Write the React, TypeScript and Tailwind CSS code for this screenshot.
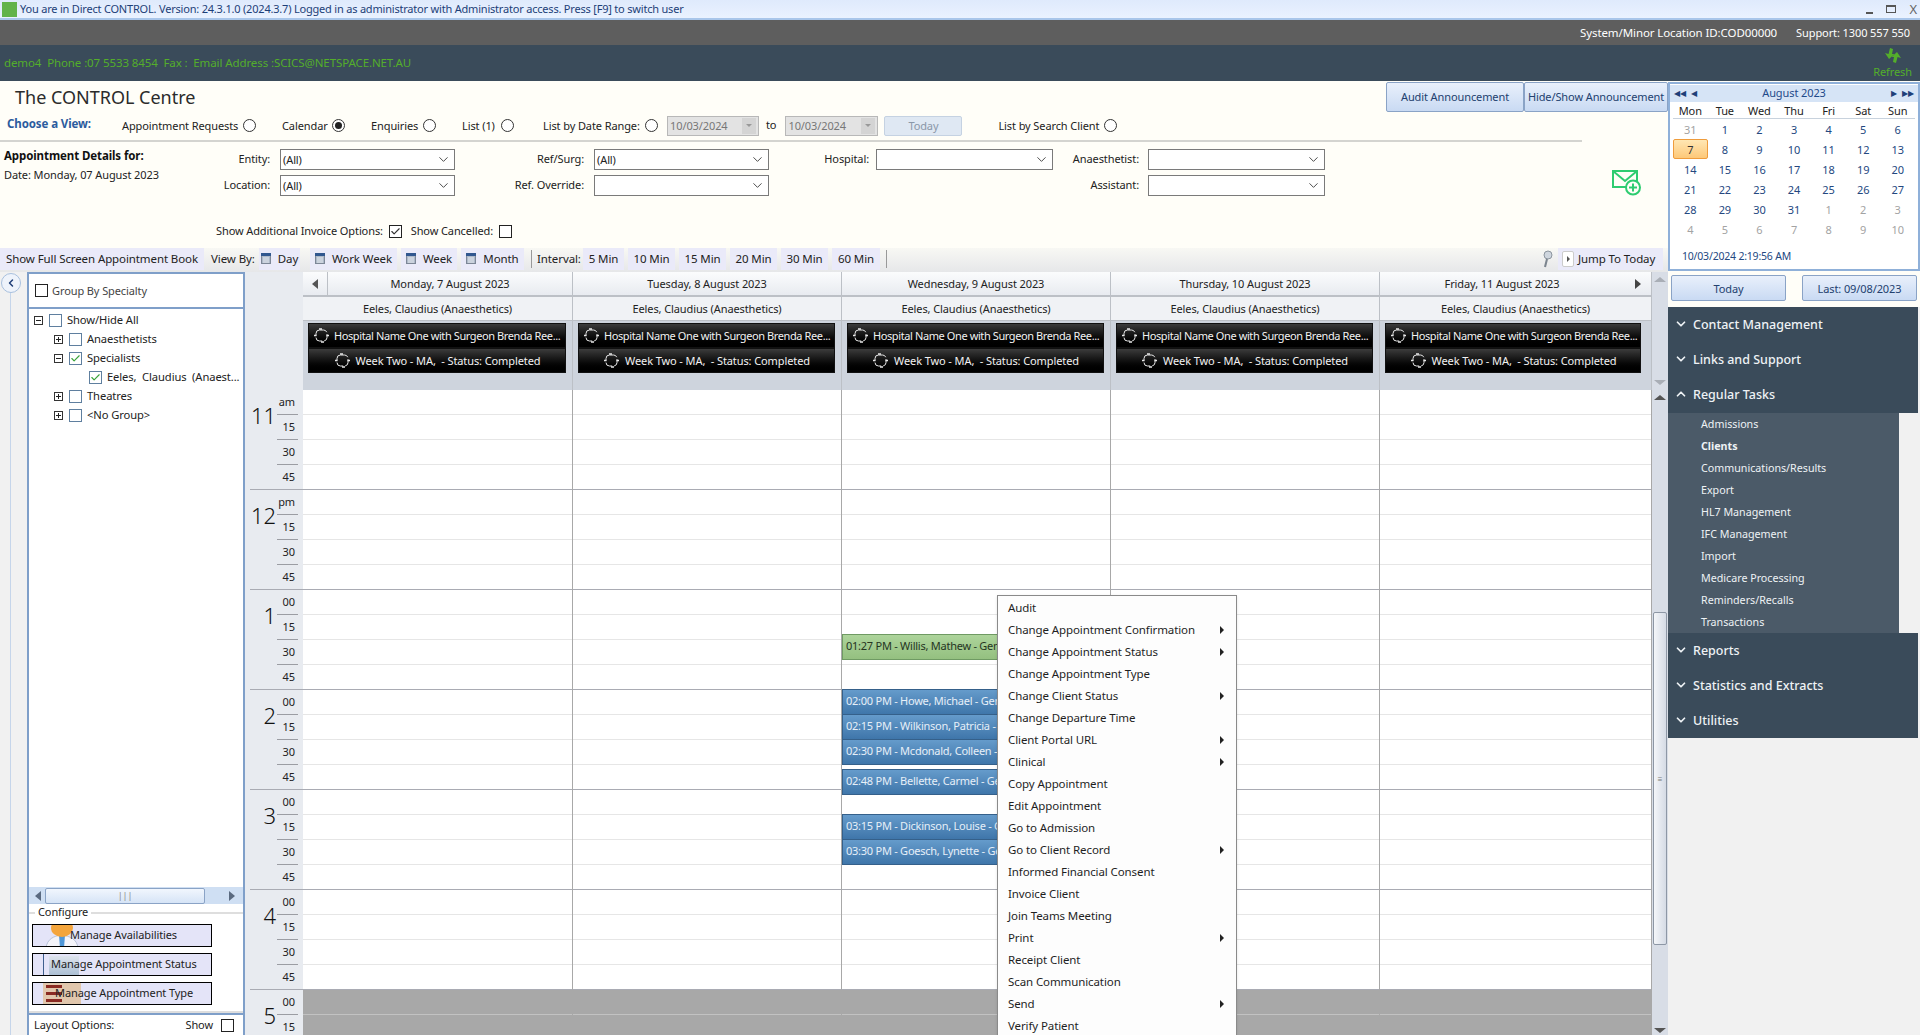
import React from 'react';
import { ChevronDown, ChevronUp, ChevronLeft, Check } from 'lucide-react';

const DAYS = [
  'Monday, 7 August 2023',
  'Tuesday, 8 August 2023',
  'Wednesday, 9 August 2023',
  'Thursday, 10 August 2023',
  'Friday, 11 August 2023',
];

const HOURS = [
  { n: '11', first: 'am' },
  { n: '12', first: 'pm' },
  { n: '1', first: '00' },
  { n: '2', first: '00' },
  { n: '3', first: '00' },
  { n: '4', first: '00' },
  { n: '5', first: '00' },
];

const MENU = [
  { t: 'Audit' },
  { t: 'Change Appointment Confirmation', sub: true },
  { t: 'Change Appointment Status', sub: true },
  { t: 'Change Appointment Type' },
  { t: 'Change Client Status', sub: true },
  { t: 'Change Departure Time' },
  { t: 'Client Portal URL', sub: true },
  { t: 'Clinical', sub: true },
  { t: 'Copy Appointment' },
  { t: 'Edit Appointment' },
  { t: 'Go to Admission' },
  { t: 'Go to Client Record', sub: true },
  { t: 'Informed Financial Consent' },
  { t: 'Invoice Client' },
  { t: 'Join Teams Meeting' },
  { t: 'Print', sub: true },
  { t: 'Receipt Client' },
  { t: 'Scan Communication' },
  { t: 'Send', sub: true },
  { t: 'Verify Patient' },
];

const APPTS = [
  { t: '01:27 PM - Willis, Mathew - General', top: 244, green: true },
  { t: '02:00 PM - Howe, Michael - General', top: 299 },
  { t: '02:15 PM - Wilkinson, Patricia - General', top: 324 },
  { t: '02:30 PM - Mcdonald, Colleen - General', top: 349 },
  { t: '02:48 PM - Bellette, Carmel - General', top: 379 },
  { t: '03:15 PM - Dickinson, Louise - General', top: 424 },
  { t: '03:30 PM - Goesch, Lynette - General', top: 449 },
];

const CAL = [
  ['31', '1', '2', '3', '4', '5', '6'],
  ['7', '8', '9', '10', '11', '12', '13'],
  ['14', '15', '16', '17', '18', '19', '20'],
  ['21', '22', '23', '24', '25', '26', '27'],
  ['28', '29', '30', '31', '1', '2', '3'],
  ['4', '5', '6', '7', '8', '9', '10'],
];

const TASKS = [
  'Admissions',
  'Clients',
  'Communications/Results',
  'Export',
  'HL7 Management',
  'IFC Management',
  'Import',
  'Medicare Processing',
  'Reminders/Recalls',
  'Transactions',
];

function Radio({ on }: { on?: boolean }) {
  return (
    <span className="flex h-[13px] w-[13px] shrink-0 items-center justify-center rounded-full border border-[#333] bg-white">
      {on && <span className="h-[7px] w-[7px] rounded-full bg-[#222]" />}
    </span>
  );
}

function RadioItem({ label, on, cls }: { label: string; on?: boolean; cls: string }) {
  return (
    <div className={`flex items-center justify-between ${cls}`}>
      <span>{label}</span>
      <Radio on={on} />
    </div>
  );
}

function Select({ value }: { value?: string }) {
  return (
    <div className="flex h-[21px] items-center justify-between border border-[#7a7a7a] bg-white pl-[2px] pr-[3px]">
      <span className="pb-px">{value}</span>
      <ChevronDown size={15} strokeWidth={1.4} className="text-[#333]" />
    </div>
  );
}

function Box({ on, blue }: { on?: boolean; blue?: boolean }) {
  return (
    <span
      className={`flex h-[13px] w-[13px] shrink-0 items-center justify-center border bg-white ${
        blue ? 'border-[#5f7f9f]' : 'border-[#222]'
      }`}
    >
      {on && (
        <Check size={11} strokeWidth={2.5} className={blue ? 'text-[#3aa43a]' : 'text-[#333]'} />
      )}
    </span>
  );
}

function Expander({ open }: { open?: boolean }) {
  return (
    <span className="relative flex h-[9px] w-[9px] shrink-0 items-center justify-center border border-[#333] bg-white">
      <span className="h-px w-[5px] bg-[#222]" />
      {!open && <span className="absolute h-[5px] w-px bg-[#222]" />}
    </span>
  );
}

function CalIcon() {
  return (
    <svg width="10" height="11" viewBox="0 0 10 11" className="shrink-0">
      <rect x="0.5" y="0.5" width="9" height="10" fill="#aeb9c9" stroke="#7d8797" />
      <rect x="0" y="0" width="10" height="3" fill="#31578f" />
      <path d="M2 5h6M2 7h6M2 9h6" stroke="#e9edf3" />
    </svg>
  );
}

function ToolBtn({ children, w, ml }: { children: React.ReactNode; w: string; ml: string }) {
  return (
    <div className={`flex h-[22px] items-center justify-center gap-[7px] bg-[#eaeaf9] pb-px ${w} ${ml}`}>
      {children}
    </div>
  );
}

function DateBox({ w, ml }: { w: string; ml: string }) {
  return (
    <div className={`flex h-[20px] items-center justify-between border border-[#b8b8b8] bg-[#e3e3e3] px-[2px] text-[#777] ${w} ${ml}`}>
      10/03/2024
      <span className="flex h-[16px] w-[14px] items-center justify-center bg-[#d4d4d4]">
        <span className="h-0 w-0 border-x-[3px] border-t-[3px] border-x-transparent border-t-[#999]" />
      </span>
    </div>
  );
}

function SyncIcon() {
  return (
    <svg width="17" height="15" viewBox="0 0 17 15" className="shrink-0" fill="none" stroke="#e8e8e8" strokeWidth="1">
      <rect x="3" y="2" width="11" height="11" rx="3.5" strokeDasharray="8 2" />
      <path d="M1 7.5 H3.5 M13.5 7.5 H16 M6 1 H9 M8 14 H11" strokeWidth="1.3" />
    </svg>
  );
}

function TreeRow({
  pad,
  open,
  expander,
  on,
  label,
}: {
  pad: string;
  open?: boolean;
  expander?: boolean;
  on?: boolean;
  label: string;
}) {
  return (
    <div className={`flex h-[19px] items-center ${pad}`}>
      {expander && <Expander open={open} />}
      <span className={expander ? 'ml-[6px]' : ''}>
        <Box on={on} blue />
      </span>
      <span className="ml-[5px] whitespace-pre pb-[2px] text-[11.2px] text-[#222]">{label}</span>
    </div>
  );
}

function Tri({ dir, cls }: { dir: 'l' | 'r' | 'u' | 'd'; cls: string }) {
  const shape = {
    l: 'border-y-[5px] border-r-[6px] border-y-transparent',
    r: 'border-y-[5px] border-l-[6px] border-y-transparent',
    u: 'border-x-[6px] border-b-[5px] border-x-transparent',
    d: 'border-x-[6px] border-t-[5px] border-x-transparent',
  }[dir];
  return <span className={`h-0 w-0 ${shape} ${cls}`} />;
}

function DayColumn({ appts }: { appts?: boolean }) {
  return (
    <div className="relative border-r border-[#a8a8a8] bg-white">
      {Array.from({ length: 26 }).map((_, i) => (
        <div
          key={i}
          className={`h-[25px] border-b ${
            i >= 24
              ? 'border-[#c2c2c2] bg-[#a8a8a8]'
              : i % 4 === 3
                ? 'border-[#a9abb3]'
                : 'border-[#e6e6e6]'
          }`}
        />
      ))}
      {appts &&
        APPTS.map((a) => (
          <div
            key={a.t}
            style={{ top: a.top }}
            className={`absolute left-0 right-0 flex h-[26px] items-center overflow-hidden whitespace-nowrap border pb-[3px] pl-[3px] text-[11px] tracking-[-0.25px] ${
              a.green
                ? 'border-[#6f9a63] bg-linear-to-b from-[#add49b] to-[#94c080] text-[#26351f]'
                : 'border-[#35608a] bg-linear-to-b from-[#659bcb] to-[#3f76aa] text-[#e6eff8]'
            }`}
          >
            {a.t}
          </div>
        ))}
    </div>
  );
}

function NavHead({ label, open }: { label: string; open?: boolean }) {
  return (
    <div className="flex h-[35px] items-center pl-[6px] pt-[2px] text-[12.5px] font-medium tracking-normal text-[#eef2f5]">
      {open ? (
        <ChevronUp size={14} strokeWidth={3} className="-mt-[3px]" />
      ) : (
        <ChevronDown size={14} strokeWidth={3} className="-mt-[3px]" />
      )}
      <span className="ml-[5px]">{label}</span>
    </div>
  );
}

export default function App() {
  return (
    <div className="relative h-[1035px] w-[1920px] overflow-hidden whitespace-nowrap bg-[#f1f1f1] font-['Noto_Sans',sans-serif] text-[11px] leading-none tracking-[-0.1px] text-[#222]">
      {/* title bar */}
      <div className="flex h-[20px] items-center border-b-2 border-[#a9c6ea] bg-linear-to-b from-[#dfeafc] to-[#eaf2ff] pl-[2px] pr-[3px] text-[#1d3f78]">
        <span className="h-[15px] w-[15px] bg-[#62b34a]" />
        <span className="ml-[3px] pb-[2px] tracking-[-0.2px]">
          You are in Direct CONTROL. Version: 24.3.1.0 (2024.3.7) Logged in as administrator with Administrator access. Press [F9] to switch user
        </span>
        <span className="ml-auto flex items-center gap-[13px] text-[#666]">
          <span className="mt-[8px] h-[2px] w-[7px] bg-[#555]" />
          <span className="h-[8px] w-[10px] border border-t-2 border-[#555]" />
          <span className="text-[13px]">X</span>
        </span>
      </div>

      {/* location bar */}
      <div className="flex h-[25px] items-center justify-end bg-[#5e5e5e] pr-[10px] text-white">
        <span className="text-[11.5px]">System/Minor Location ID:COD00000</span>
        <span className="ml-[19px]">Support: 1300 557 550</span>
      </div>

      {/* practice bar */}
      <div className="flex h-[36px] items-center justify-between bg-[#3a4b5a] pl-[4px] pr-[8px] text-[#54ae2b]">
        <span className="whitespace-pre pb-px text-[11.5px]">demo4  Phone :07 5533 8454  Fax :  Email Address :SCICS@NETSPACE.NET.AU</span>
        <div className="flex flex-col items-center gap-[3px] pb-[2px]">
          <svg width="16" height="15" viewBox="0 0 16 15" fill="#54ae2b">
            <path d="M5 0 L8 1 L7 6 L9.5 6 L4 11 L0 5 L3.5 6 Z" />
            <path d="M11 15 L8 14 L9 9 L6.5 9 L12 4 L16 10 L12.5 9 Z" />
          </svg>
          <span>Refresh</span>
        </div>
      </div>

      <div className="flex">
        {/* left / centre */}
        <div className="w-[1668px] shrink-0">
          <div className="h-[167px] bg-[#fffef8]">
            <div className="flex h-[32px]">
              <span className="ml-[15px] mt-[7px] text-[18px] tracking-normal text-[#2b2b2b]">The CONTROL Centre</span>
              <div className="ml-auto mt-px flex h-[30px] text-[#23416f]">
                <div className="flex w-[138px] items-center justify-center rounded-[2px] border border-[#8aa3c6] bg-linear-to-b from-[#e9f0fb] to-[#c9daf3] pb-px">
                  Audit Announcement
                </div>
                <div className="flex w-[144px] items-center justify-center rounded-[2px] border border-[#8aa3c6] bg-linear-to-b from-[#e9f0fb] to-[#c9daf3] pb-px">
                  Hide/Show Announcement
                </div>
              </div>
            </div>

            <div className="flex h-[29px] w-[1582px] items-center border-b-2 border-[#d4d4d0] pb-[2px]">
              <span className="-mt-[3px] ml-[7px] w-[115px] text-[11.5px] font-bold text-[#2c5c9e]">Choose a View:</span>
              <RadioItem label="Appointment Requests" cls="w-[134px]" />
              <RadioItem label="Calendar" on cls="ml-[26px] w-[63px]" />
              <RadioItem label="Enquiries" cls="ml-[26px] w-[65px]" />
              <RadioItem label="List (1)" cls="ml-[26px] w-[52px]" />
              <RadioItem label="List by Date Range:" cls="ml-[29px] w-[115px]" />
              <DateBox w="w-[92px]" ml="ml-[9px]" />
              <span className="-mt-[2px] ml-[7px]">to</span>
              <DateBox w="w-[93px]" ml="ml-[9px]" />
              <div className="ml-[6px] flex h-[20px] w-[78px] items-center justify-center rounded-[2px] border border-[#c5d2e2] bg-[#dfe8f3] text-[#8a97a8]">
                Today
              </div>
              <RadioItem label="List by Search Client" cls="ml-[36px] w-[119px]" />
            </div>

            <div className="mt-[7px] flex items-end">
              <div className="grid grid-cols-[190px_90px_175px_139px_175px_107px_177px_95px_177px] grid-rows-[21px_21px] gap-y-[5px]">
                <div className="row-span-2 pl-[4px] pt-px">
                  <div className="text-[11.5px] font-bold text-[#111]">Appointment Details for:</div>
                  <div className="mt-[7px]">Date: Monday, 07 August 2023</div>
                </div>
                <div className="self-center pb-[2px] pr-[10px] text-right">Entity:</div>
                <Select value="(All)" />
                <div className="self-center pb-[2px] pr-[10px] text-right">Ref/Surg:</div>
                <Select value="(All)" />
                <div className="self-center pb-[2px] pr-[7px] text-right">Hospital:</div>
                <Select />
                <div className="self-center pb-[2px] pr-[9px] text-right">Anaesthetist:</div>
                <Select />
                <div className="self-center pb-[2px] pr-[10px] text-right">Location:</div>
                <Select value="(All)" />
                <div className="self-center pb-[2px] pr-[10px] text-right">Ref. Override:</div>
                <Select />
                <div />
                <div />
                <div className="self-center pb-[2px] pr-[9px] text-right">Assistant:</div>
                <Select />
              </div>
              <svg width="30" height="26" viewBox="0 0 30 26" fill="none" className="ml-[287px]">
                <path d="M1 1 H25 V17 H1 Z M1 1 L13 11 L25 1" stroke="#2ecc71" strokeWidth="2" />
                <circle cx="21" cy="17.5" r="7" fill="#fffef8" stroke="#2ecc71" strokeWidth="2" />
                <path d="M21 13.5 V21.5 M17 17.5 H25" stroke="#2ecc71" strokeWidth="2" />
              </svg>
            </div>

            <div className="ml-[216px] mt-[25px] flex h-[20px] w-[296px] items-center">
              <span className="pb-[2px]">Show Additional Invoice Options:</span>
              <span className="ml-auto">
                <Box on />
              </span>
              <span className="ml-[9px] pb-[2px]">Show Cancelled:</span>
              <span className="ml-[6px]">
                <Box />
              </span>
            </div>
          </div>

          {/* toolbar */}
          <div className="flex h-[24px] items-start bg-linear-to-b from-[#f8f8f4] to-[#e6e7e9] text-[11.5px]">
            <ToolBtn w="w-[204px]" ml="ml-0">Show Full Screen Appointment Book</ToolBtn>
            <span className="ml-[7px] mt-[5px] w-[41px]">View By:</span>
            <ToolBtn w="w-[41px]" ml="ml-[7px]"><CalIcon />Day</ToolBtn>
            <ToolBtn w="w-[87px]" ml="ml-[10px]"><CalIcon />Work Week</ToolBtn>
            <ToolBtn w="w-[56px]" ml="ml-[4px]"><CalIcon />Week</ToolBtn>
            <ToolBtn w="w-[63px]" ml="ml-[4px]"><CalIcon />Month</ToolBtn>
            <span className="ml-[7px] mt-[2px] h-[18px] w-px bg-[#999]" />
            <span className="ml-[5px] mt-[5px] w-[46px]">Interval:</span>
            <ToolBtn w="w-[41px]" ml="ml-0">5 Min</ToolBtn>
            <ToolBtn w="w-[47px]" ml="ml-[4px]">10 Min</ToolBtn>
            <ToolBtn w="w-[47px]" ml="ml-[4px]">15 Min</ToolBtn>
            <ToolBtn w="w-[47px]" ml="ml-[4px]">20 Min</ToolBtn>
            <ToolBtn w="w-[47px]" ml="ml-[4px]">30 Min</ToolBtn>
            <ToolBtn w="w-[48px]" ml="ml-[4px]">60 Min</ToolBtn>
            <span className="ml-[6px] mt-[2px] h-[18px] w-px bg-[#999]" />
            <svg width="11" height="18" viewBox="0 0 11 18" className="ml-[655px] mt-[2px]">
              <circle cx="6" cy="5" r="4" fill="#cfd6de" stroke="#8c959e" />
              <path d="M5 9 L3 17" stroke="#7c858e" strokeWidth="2" />
            </svg>
            <div className="ml-auto mr-[5px] flex h-[22px] w-[105px] items-center gap-[4px] bg-[#eaeaf9] pb-px pl-[4px]">
              <span className="mt-px flex h-[16px] w-[12px] items-center justify-center rounded-[2px] border border-[#ccc] bg-white">
                <span className="h-0 w-0 border-y-[3px] border-l-[3px] border-y-transparent border-l-[#555]" />
              </span>
              Jump To Today
            </div>
          </div>

          {/* main */}
          <div className="flex h-[763px]">
            <div className="relative w-[27px] shrink-0 bg-[#f1f1f1]">
              <span className="absolute bottom-0 left-[10px] top-[10px] w-px bg-[#c5d5ea]" />
              <span className="absolute left-px top-px flex h-[20px] w-[20px] items-center justify-center rounded-full border border-[#a8c0de] bg-[#eef3fb] text-[#1f3f78]">
                <ChevronLeft size={12} strokeWidth={3} />
              </span>
            </div>

            {/* tree panel */}
            <div className="flex w-[218px] shrink-0 flex-col border-x-2 border-[#7f9fc9] bg-white">
              <div className="flex h-[37px] shrink-0 items-center gap-[4px] border-y-2 border-[#7f9fc9] pl-[6px] text-[#444]">
                <Box />
                <span className="pb-px">Group By Specialty</span>
              </div>
              <div className="flex flex-1 flex-col pt-[2px] text-[#222]">
                <TreeRow pad="pl-[5px]" expander open label="Show/Hide All" />
                <TreeRow pad="pl-[25px]" expander label="Anaesthetists" />
                <TreeRow pad="pl-[25px]" expander open on label="Specialists" />
                <TreeRow pad="pl-[60px]" on label="Eeles,  Claudius  (Anaest..." />
                <TreeRow pad="pl-[25px]" expander label="Theatres" />
                <TreeRow pad="pl-[25px]" expander label="<No Group>" />
              </div>
              <div className="flex h-[17px] shrink-0 items-center bg-[#cfdff3] text-[#555]">
                <span className="ml-[6px] flex w-[6px]">
                  <Tri dir="l" cls="border-r-[#5a6a80]" />
                </span>
                <span className="ml-[4px] flex h-[16px] w-[160px] items-center justify-center rounded-[2px] border border-[#8aa3c6] bg-linear-to-b from-[#f1f6fd] to-[#d6e4f6] text-[9px] text-[#8a8a8a]">
                  |||
                </span>
                <span className="ml-[24px] flex">
                  <Tri dir="r" cls="border-l-[#5a6a80]" />
                </span>
              </div>
              <div className="relative mt-[8px] h-[101px] shrink-0 border-b-2 border-t-2 border-[#dedede]">
                <span className="absolute -top-[8px] left-[6px] bg-white px-[3px] text-[#222]">Configure</span>
                <div className="ml-[3px] mt-[10px] flex w-[180px] flex-col gap-[6px]">
                  <div className="relative flex h-[23px] items-center overflow-hidden border border-black bg-[#e4e4f8] pb-[2px] pl-[37px]">
                    <svg width="36" height="23" viewBox="0 0 36 23" className="absolute left-[11px] top-0">
                      <path d="M2 23 C3 14 10 11 17 10 C26 11 33 14 34 23 Z" fill="#f4f4fa" stroke="#b8c3d8" />
                      <path d="M15 10 H21 L20 23 H16 Z" fill="#4f97d8" />
                      <ellipse cx="18" cy="3" rx="11" ry="9" fill="#f4a53c" />
                    </svg>
                    <span className="relative">Manage Availabilities</span>
                  </div>
                  <div className="relative flex h-[23px] items-center overflow-hidden border border-black bg-[#e4e4f8] pb-[2px] pl-[18px]">
                    <span className="absolute left-[10px] top-0 h-full w-px bg-[#3f5f8f]" />
                    <span className="absolute left-[16px] top-[2px] h-[21px] w-[30px] bg-linear-to-b from-[#dde3ec] to-[#a7bcd2]" />
                    <span className="relative">Manage Appointment Status</span>
                  </div>
                  <div className="relative flex h-[23px] items-center overflow-hidden border border-black bg-[#e4e4f8] pb-[2px] pl-[22px]">
                    <span className="absolute left-[10px] top-0 h-full w-[38px] bg-[#e1c7ad]" />
                    <span className="absolute left-[13px] top-[2px] h-[3px] w-[16px] bg-[#8a2a22]" />
                    <span className="absolute left-[13px] top-[9px] h-[3px] w-[16px] bg-[#8a2a22]" />
                    <span className="absolute left-[13px] top-[16px] h-[3px] w-[16px] bg-[#8a2a22]" />
                    <span className="relative">Manage Appointment Type</span>
                  </div>
                </div>
              </div>
              <div className="flex h-[22px] shrink-0 items-center border-t-2 border-[#7f9fc9] pl-[5px] pr-[9px]">
                <span className="pb-px">Layout Options:</span>
                <span className="ml-auto pb-px">Show</span>
                <span className="ml-[8px]">
                  <Box />
                </span>
              </div>
            </div>

            {/* calendar */}
            <div className="flex w-[1423px] shrink-0 flex-col">
              <div className="flex h-[118px] shrink-0 bg-[#e8ebf0]">
                <div className="w-[58px] shrink-0" />
                <div className="grid w-[1349px] shrink-0 grid-cols-[270px_269px_269px_269px_272px] grid-rows-[25px_24px_69px] border-b-2 border-[#c3c6cc]">
                  {DAYS.map((d, i) => (
                    <div
                      key={d}
                      className="flex items-center border-b-2 border-r border-[#bcc0c6] bg-linear-to-b from-[#fbfcfd] to-[#e8ebf0] text-[#222]"
                    >
                      {i === 0 && (
                        <span className="flex h-full w-[25px] shrink-0 items-center justify-center border-r border-[#bcc0c6]">
                          <Tri dir="l" cls="border-r-[#555]" />
                        </span>
                      )}
                      <span className="flex-1 text-center">{d}</span>
                      {i === 4 && (
                        <span className="flex h-full w-[27px] shrink-0 items-center justify-center">
                          <Tri dir="r" cls="border-l-[#444]" />
                        </span>
                      )}
                    </div>
                  ))}
                  {DAYS.map((d) => (
                    <div
                      key={d}
                      className="flex items-center justify-center border-b border-r border-[#bcc0c6] bg-[#f0f2f5]"
                    >
                      Eeles, Claudius (Anaesthetics)
                    </div>
                  ))}
                  {DAYS.map((d, i) => (
                    <div
                      key={d}
                      className={`border-r border-[#bcc0c6] bg-[#ced4dd] pl-[5px] pt-[2px] ${i === 4 ? 'pr-[10px]' : 'pr-[6px]'}`}
                    >
                      <div className="flex h-[25px] items-center overflow-hidden whitespace-nowrap border border-[#111] bg-linear-to-b from-[#3c3c3c] to-[#000] pl-[4px] text-[#f2f2f2]">
                        <SyncIcon />
                        <span className="ml-[4px] pb-px tracking-[-0.4px]">Hospital Name One with Surgeon Brenda Ree...</span>
                      </div>
                      <div className="flex h-[25px] items-center justify-center overflow-hidden whitespace-pre border border-[#111] bg-linear-to-b from-[#3c3c3c] to-[#000] text-[#f2f2f2]">
                        <SyncIcon />
                        <span className="ml-[5px] pb-px">Week Two - MA,  - Status: Completed</span>
                      </div>
                    </div>
                  ))}
                </div>
                <div className="flex flex-1 flex-col items-center justify-between bg-[#d8dde6] py-[5px]">
                  <Tri dir="u" cls="border-b-[#a9aeb6]" />
                  <Tri dir="d" cls="border-t-[#a9aeb6]" />
                </div>
              </div>

              <div className="flex min-h-0 flex-1 overflow-hidden">
                {/* time rail */}
                <div className="w-[58px] shrink-0 bg-[#e8ebf0]">
                  {HOURS.map((h) => (
                    <div key={h.n} className="relative ml-[5px] h-[100px] border-b border-[#a9abb3]">
                      <span className="absolute right-[27px] top-0 flex h-[50px] items-center text-[22px] font-light text-[#111]">
                        {h.n}
                      </span>
                      {[h.first, '15', '30', '45'].map((q, i) => (
                        <div
                          key={q}
                          className={`ml-[27px] mr-[5px] flex h-[25px] items-center justify-end pb-[2px] pr-[3px] text-[#222] ${
                            i < 3 ? 'border-b border-[#9b9da3]' : ''
                          }`}
                        >
                          {q}
                        </div>
                      ))}
                    </div>
                  ))}
                </div>
                <div className="grid w-[1349px] shrink-0 grid-cols-[270px_269px_269px_269px_272px]">
                  <DayColumn />
                  <DayColumn />
                  <DayColumn appts />
                  <DayColumn />
                  <DayColumn />
                </div>
                <div className="relative flex-1 bg-[#d8dde6]">
                  <span className="absolute left-[2px] top-[5px] flex">
                    <Tri dir="u" cls="border-b-[#555]" />
                  </span>
                  <span className="absolute left-px top-[222px] flex h-[333px] w-[14px] items-center justify-center rounded-[2px] border border-[#8d97a5] bg-linear-to-r from-[#f4f6f9] to-[#d5dbe5] text-[8px] text-[#777]">
                    ≡
                  </span>
                  <span className="absolute bottom-[2px] left-[2px] flex">
                    <Tri dir="d" cls="border-t-[#555]" />
                  </span>
                </div>
              </div>
            </div>
          </div>
        </div>

        {/* right rail */}
        <div className="w-[252px] shrink-0">
          <div className="h-px bg-[#fffef8]" />
          <div className="flex h-[189px] flex-col border-2 border-[#8fb0d9] bg-white pt-px">
            <div className="flex h-[17px] shrink-0 items-center justify-between bg-[#d6e4f6] px-[4px] pb-[2px] text-[#1f4a8a]">
              <span className="flex items-center gap-[3px] text-[8px] text-[#1f3f78]">◀◀ <span className="ml-[2px]">◀</span></span>
              <span>August 2023</span>
              <span className="flex items-center gap-[3px] text-[8px] text-[#1f3f78]">▶ <span className="ml-[2px]">▶▶</span></span>
            </div>
            <div className="mx-[3px] grid h-[17px] shrink-0 grid-cols-7 items-center border-b border-[#c8d2dd] text-center text-[#222]">
              {['Mon', 'Tue', 'Wed', 'Thu', 'Fri', 'Sat', 'Sun'].map((d) => (
                <span key={d}>{d}</span>
              ))}
            </div>
            <div className="mx-[3px] grid shrink-0 grid-cols-7 grid-rows-[repeat(6,20px)] text-center">
              {CAL.flatMap((row, r) =>
                row.map((d, c) => {
                  const muted = (r === 0 && c === 0) || (r === 4 && c >= 4) || r === 5;
                  const today = r === 1 && c === 0;
                  return (
                    <span
                      key={`${r}-${c}`}
                      className={`flex items-center justify-center ${
                        today
                          ? 'rounded-[2px] border border-[#ef9c3c] bg-linear-to-b from-[#ffe7b3] to-[#fdc878] text-[#333]'
                          : muted
                            ? 'text-[#a3a3a3]'
                            : 'text-[#24487f]'
                      }`}
                    >
                      {d}
                    </span>
                  );
                }),
              )}
            </div>
            <div className="ml-[12px] mt-[12px] text-[10.5px] tracking-[-0.2px] text-[#24487f]">10/03/2024 2:19:56 AM</div>
          </div>

          <div className="flex h-[36px] items-start justify-between bg-[#fffef8] px-[3px] pt-[4px]">
            <div className="flex h-[26px] w-[115px] items-center justify-center rounded-[2px] border border-[#8aa3c6] bg-linear-to-b from-[#e9f0fb] to-[#c9daf3] text-[#23416f]">
              Today
            </div>
            <div className="flex h-[26px] w-[115px] items-center justify-center rounded-[2px] border border-[#8aa3c6] bg-linear-to-b from-[#e9f0fb] to-[#c9daf3] text-[#23416f]">
              Last: 09/08/2023
            </div>
          </div>

          <div className="mr-[2px]">
            <div className="bg-[#3a4b5a] pb-px">
              <NavHead label="Contact Management" />
              <NavHead label="Links and Support" />
              <NavHead label="Regular Tasks" open />
            </div>
            <div className="flex">
              <div className="w-[231px] bg-[#4b5a68]">
                {TASKS.map((t) => (
                  <div
                    key={t}
                    className={`flex h-[22px] items-center pl-[33px] text-[10.7px] tracking-normal text-[#eef2f5] ${t === 'Clients' ? 'font-bold' : ''}`}
                  >
                    {t}
                  </div>
                ))}
              </div>
              <div className="flex-1 bg-[#f1f1f1]" />
            </div>
            <div className="bg-[#3a4b5a]">
              <NavHead label="Reports" />
              <NavHead label="Statistics and Extracts" />
              <NavHead label="Utilities" />
            </div>
          </div>
        </div>
      </div>

      {/* context menu */}
      <div className="absolute left-[997px] top-[595px] w-[240px] border border-[#8a8a8a] bg-[#fdfdfd] pt-[1px] text-[11.5px] shadow-sm">
        {MENU.map((m) => (
          <div key={m.t} className="flex h-[22px] items-center pl-[10px] pr-[12px] text-[#1f1f1f]">
            <span>{m.t}</span>
            {m.sub && (
              <span className="ml-auto h-0 w-0 border-y-[4px] border-l-[4px] border-y-transparent border-l-[#222]" />
            )}
          </div>
        ))}
      </div>
    </div>
  );
}
